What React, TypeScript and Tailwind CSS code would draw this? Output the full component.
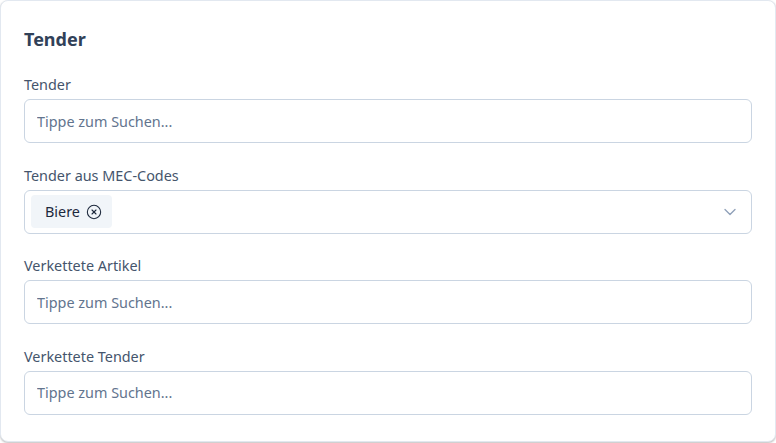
import { ChevronDown, CircleX } from "lucide-react";

function Field({ label, children }: { label: string; children: React.ReactNode }) {
  return (
    <div className="flex flex-col gap-1">
      <label className="text-[14.4px] leading-5 text-slate-600">{label}</label>
      {children}
    </div>
  );
}

function SearchInput() {
  return (
    <input
      type="text"
      placeholder="Tippe zum Suchen..."
      className="h-11 w-full rounded-md border border-slate-300 bg-white px-3 text-[14.4px] text-slate-700 placeholder:text-slate-500 outline-none"
    />
  );
}

export default function App() {
  return (
    <div className="min-h-screen bg-white" style={{ fontFamily: '"Noto Sans", "Open Sans", sans-serif' }}>
      <div className="h-[442px] rounded-lg border border-slate-200 bg-white px-[23px] pt-[24px] shadow-[0_1px_2px_rgba(0,0,0,0.25)]">
        <h2 className="text-lg font-bold leading-7 text-slate-700">Tender</h2>
        <div className="mt-[22px] flex flex-col gap-[22.5px]">
          <Field label="Tender">
            <SearchInput />
          </Field>
          <Field label="Tender aus MEC-Codes">
            <div className="flex h-11 w-full items-center justify-between rounded-md border border-slate-300 bg-white pl-[6px] pr-[11px]">
              <span className="flex h-[33px] items-center gap-1.5 rounded bg-slate-100 pl-[14px] pr-[10px] text-[14.4px] text-slate-800">
                Biere
                <CircleX className="h-4 w-4 text-slate-800" strokeWidth={1.6} />
              </span>
              <ChevronDown className="h-5 w-5 text-slate-400" strokeWidth={1.6} />
            </div>
          </Field>
          <Field label="Verkettete Artikel">
            <SearchInput />
          </Field>
          <Field label="Verkettete Tender">
            <SearchInput />
          </Field>
        </div>
      </div>
    </div>
  );
}
